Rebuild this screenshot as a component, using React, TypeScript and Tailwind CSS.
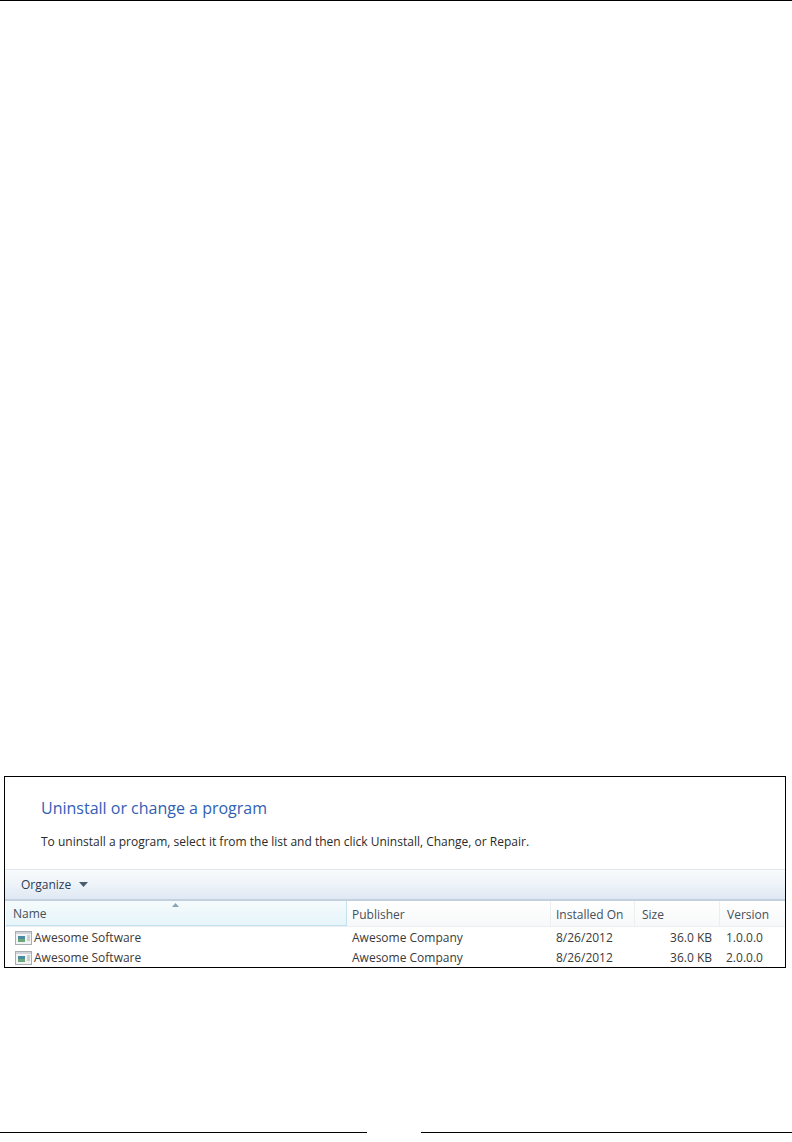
import React from 'react';

const rows = [
  { name: 'Awesome Software', publisher: 'Awesome Company', date: '8/26/2012', size: '36.0 KB', version: '1.0.0.0' },
  { name: 'Awesome Software', publisher: 'Awesome Company', date: '8/26/2012', size: '36.0 KB', version: '2.0.0.0' },
];

const ProgramIcon = () => (
  <svg width="17" height="14" viewBox="0 0 17 14" className="shrink-0">
    <rect x="0.500" y="0.500" width="16" height="13" fill="#f2f3f4" stroke="#a9adb2" />
    <rect x="1" y="1" width="15" height="2" fill="#d0d4d9" />
    <rect x="3" y="5" width="7" height="6" fill="#4a8ba0" />
    <rect x="3" y="8" width="7" height="3" fill="#6fa878" />
    <path d="M12 5h3M12 7h3M12 9h3" stroke="#a3a8ae" strokeWidth="1" />
  </svg>
);

export default function App() {
  return (
    <div className="h-[1142px] w-[792px] flex flex-col bg-white font-['Open_Sans',sans-serif] overflow-hidden">
      <div className="h-px bg-black shrink-0" />

      <div className="mt-[775px] mx-1 w-[782px] h-[192px] border border-black flex flex-col shrink-0">
        <div className="h-[92px] pl-[36px] shrink-0">
          <h1 className="mt-[19px] text-[16px] leading-6 text-[#3260b4]">Uninstall or change a program</h1>
          <p className="mt-[12px] text-[12px] leading-5 text-[#2a2a2a]">
            To uninstall a program, select it from the list and then click Uninstall, Change, or Repair.
          </p>
        </div>

        <div className="h-[32px] shrink-0 flex items-center pl-4 gap-2 border-t border-[#e0e8f0] border-b-2 border-b-[#c3d0de] bg-gradient-to-b from-[#f9fbfd] via-[#eef3f9] to-[#dfe8f3]">
          <span className="text-[12px] text-[#2a3d55]">Organize</span>
          <svg width="9" height="5" viewBox="0 0 9 5">
            <path d="M0 0h9L4.500 5z" fill="#4a5a70" />
          </svg>
        </div>

        <div className="flex h-[26px] shrink-0 text-[12px] text-[#454f5a] border-b border-[#eceef0]">
          <div className="relative w-[341px] ml-px flex items-end pb-[2px] pl-[7px] border-r border-[#c5e2ef] border-b border-b-[#bfe3f2] bg-gradient-to-b from-[#f5fbfc] to-[#e6f4f9]">
            <svg width="7" height="4" viewBox="0 0 7 4" className="absolute top-[2px] left-[166px]">
              <path d="M0 4L3.500 0 7 4z" fill="#8ba2b5" />
            </svg>
            Name
          </div>
          <div className="w-[204px] flex items-end pb-[2px] pl-[5px] border-r border-[#eceef0] bg-gradient-to-b from-white to-[#f7f8f9]">Publisher</div>
          <div className="w-[84px] flex items-end pb-[2px] pl-[5px] border-r border-[#eceef0] bg-gradient-to-b from-white to-[#f7f8f9]">Installed On</div>
          <div className="w-[85px] flex items-end pb-[2px] pl-[7px] border-r border-[#eceef0] bg-gradient-to-b from-white to-[#f7f8f9]">Size</div>
          <div className="flex-1 flex items-end pb-[2px] pl-[7px] bg-gradient-to-b from-white to-[#f7f8f9]">Version</div>
        </div>

        <div className="flex flex-col flex-1 pt-[1px] text-[12px] text-[#3a3a3a] overflow-hidden">
          {rows.map((row) => (
            <div key={row.version} className="flex h-5 items-center shrink-0">
              <div className="w-[342px] flex items-center pl-[10px] gap-[2px]">
                <ProgramIcon />
                <span>{row.name}</span>
              </div>
              <div className="w-[204px] pl-[5px]">{row.publisher}</div>
              <div className="w-[84px] pl-[5px]">{row.date}</div>
              <div className="w-[85px] pr-[8px] text-right">{row.size}</div>
              <div className="flex-1 pl-[6px]">{row.version}</div>
            </div>
          ))}
        </div>
      </div>

      <div className="mt-[164px] flex justify-between shrink-0">
        <div className="h-px w-[367px] bg-black" />
        <div className="h-px w-[371px] bg-black" />
      </div>
    </div>
  );
}
